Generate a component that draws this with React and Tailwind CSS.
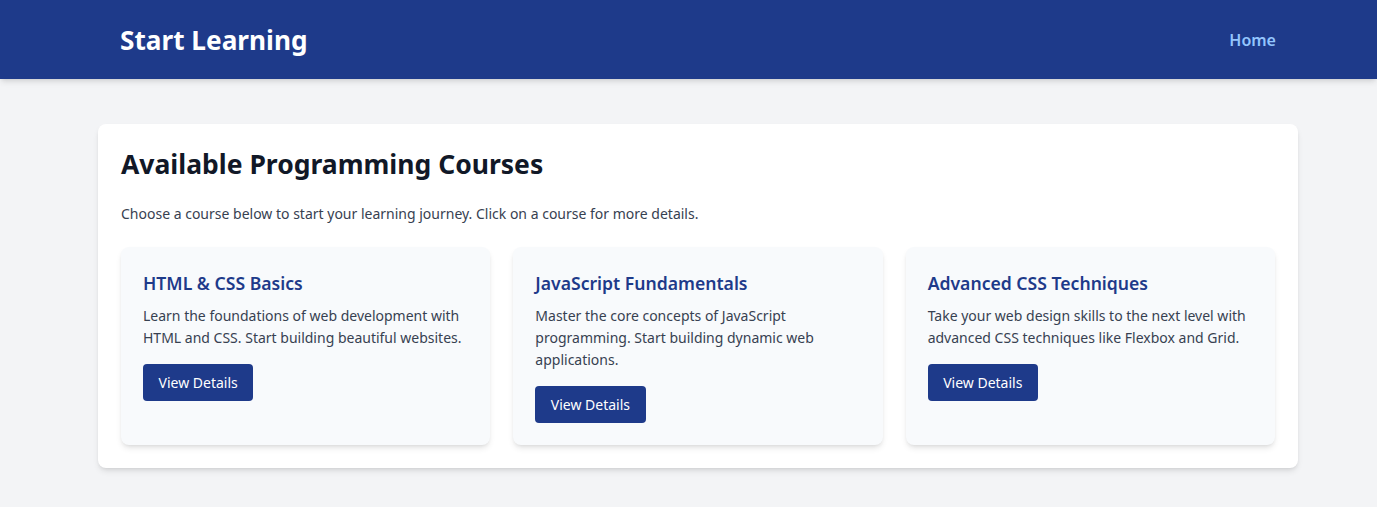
export default function App() {
  const courses = [
    {
      title: "HTML & CSS Basics",
      desc: "Learn the foundations of web development with HTML and CSS. Start building beautiful websites.",
    },
    {
      title: "JavaScript Fundamentals",
      desc: "Master the core concepts of JavaScript programming. Start building dynamic web applications.",
    },
    {
      title: "Advanced CSS Techniques",
      desc: "Take your web design skills to the next level with advanced CSS techniques like Flexbox and Grid.",
    },
  ];
  return (
    <div className="min-h-[507px] bg-[#f3f4f6] font-['Noto_Sans',sans-serif]">
      <header className="h-[79px] bg-[#1e3a8a] shadow-md">
        <div className="ml-[98px] w-[1200px] h-full px-[22px] flex items-center justify-between">
          <h1 className="text-[26.2px] font-bold text-white mt-[3px]">Start Learning</h1>
          <a className="text-[16px] font-semibold text-[#93c5fd]">Home</a>
        </div>
      </header>
      <main className="ml-[98px] w-[1200px] pt-[45px] pb-[39px]">
        <section className="bg-white rounded-lg shadow-md px-[23px] pt-[20px] pb-[23px]">
          <h2 className="text-[26.5px] font-bold text-[#111827] leading-[40px]">Available Programming Courses</h2>
          <p className="mt-[19px] text-[14px] text-[#374151] leading-[22px]">
            Choose a course below to start your learning journey. Click on a course for more details.
          </p>
          <div className="mt-[22px] grid grid-cols-3 gap-[23px]">
            {courses.map((c) => (
              <div key={c.title} className="bg-[#f8fafc] rounded-lg shadow-md p-[22px]">
                <h3 className="text-[17.6px] font-semibold text-[#1e3a8a] leading-[27px] mt-[1px]">{c.title}</h3>
                <p className="mt-[8px] text-[14px] text-[#374151] leading-[22px]">{c.desc}</p>
                <button className="mt-[15px] h-[37px] px-[15.5px] rounded bg-[#1e3a8a] text-white text-[14px]">View Details</button>
              </div>
            ))}
          </div>
        </section>
      </main>
    </div>
  );
}
